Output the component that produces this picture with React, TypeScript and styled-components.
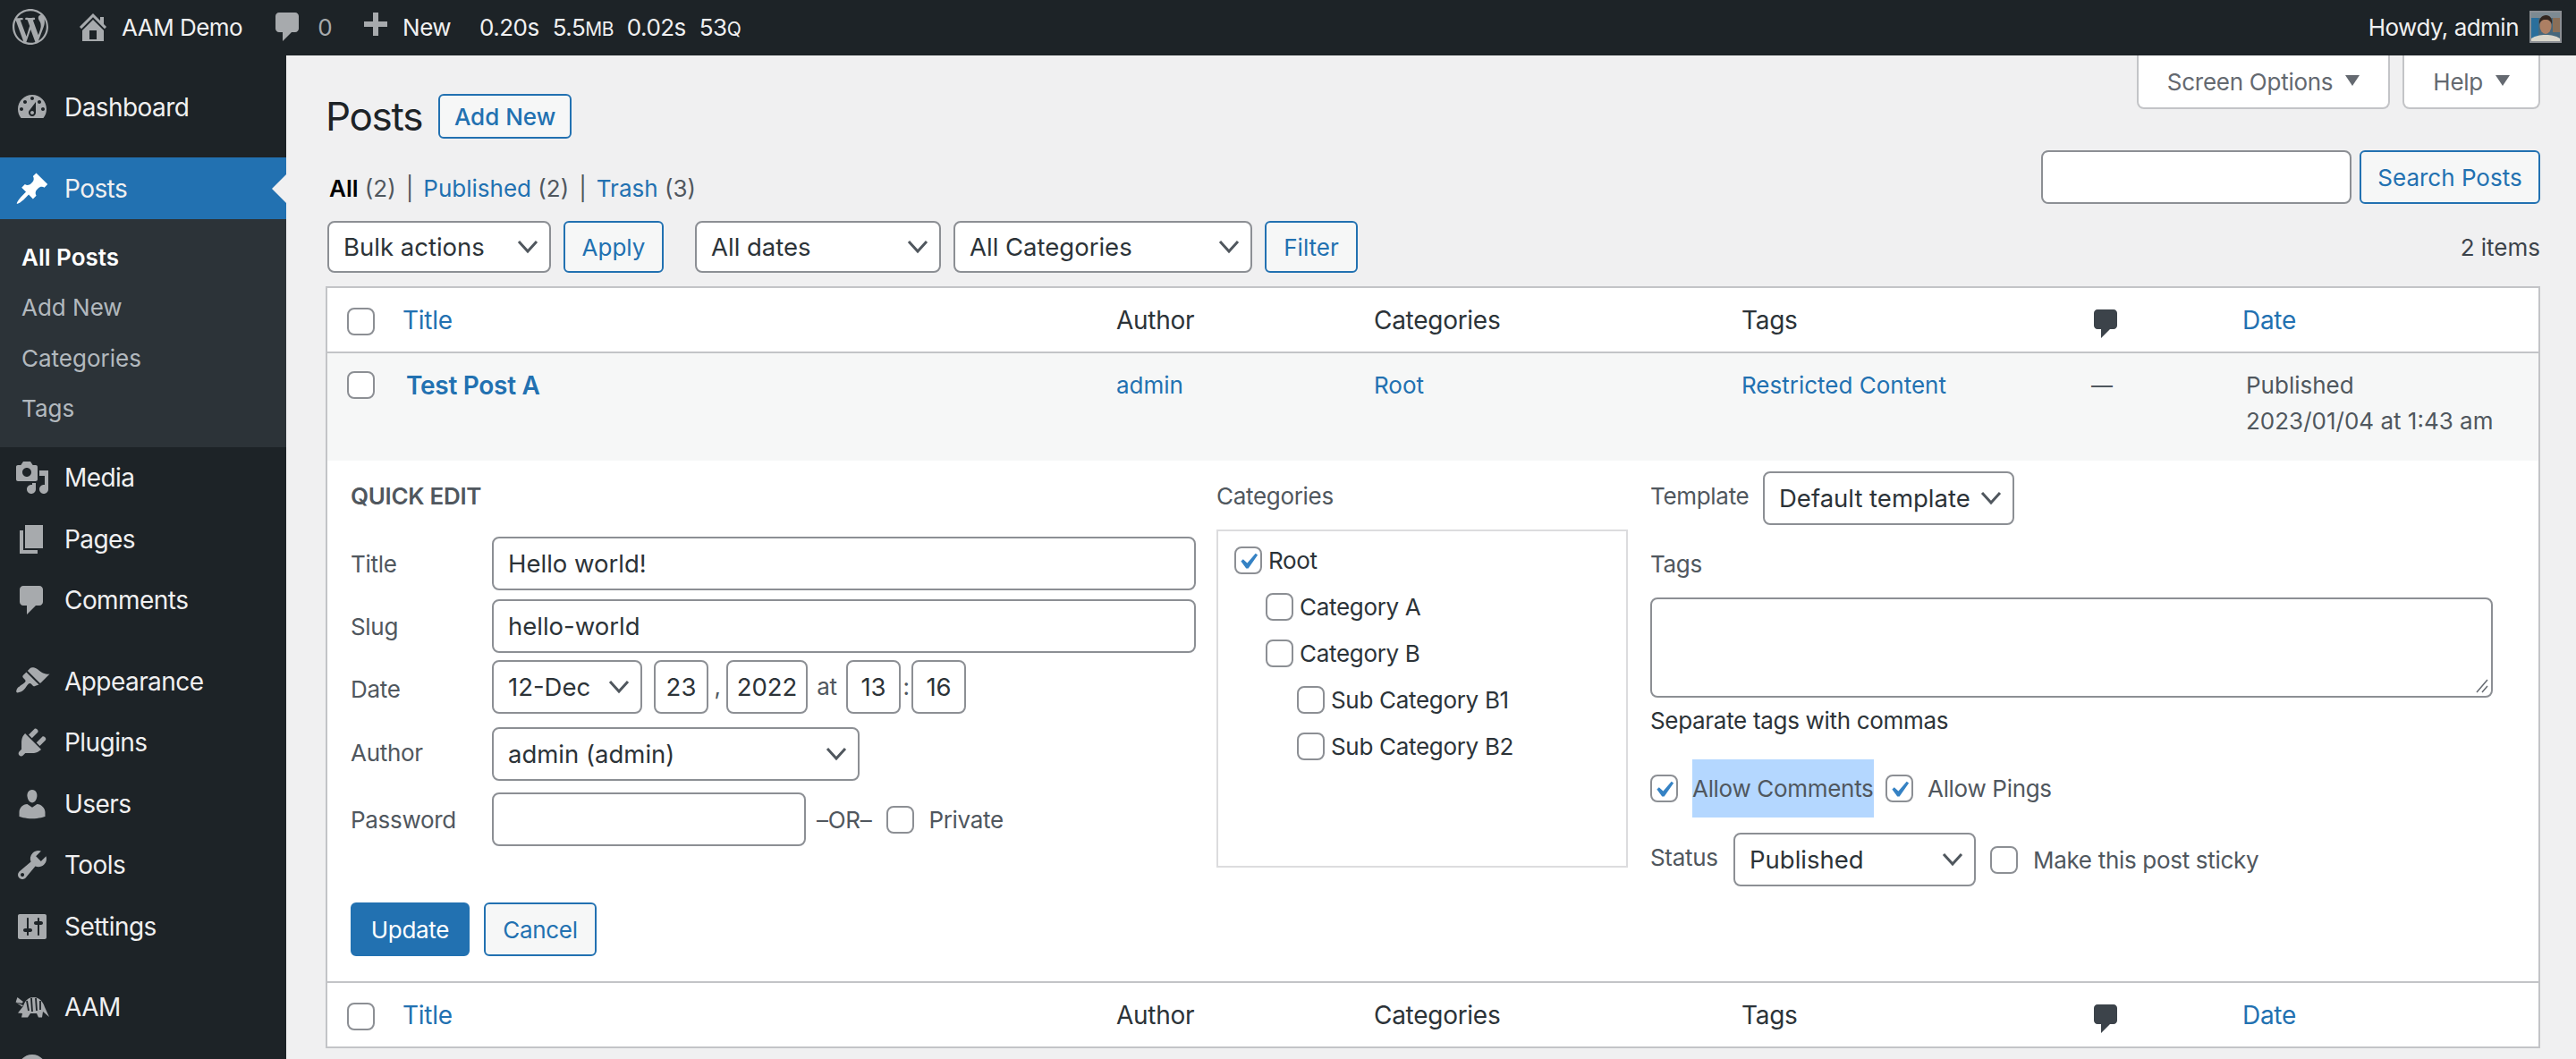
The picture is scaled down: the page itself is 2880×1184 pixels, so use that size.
import React from "react";
import styled, { createGlobalStyle } from "styled-components";

const GlobalStyle = createGlobalStyle`
  html, body {
    margin: 0;
    padding: 0;
    width: 2880px;
    height: 1184px;
    overflow: hidden;
    background: #f0f0f1;
    font-family: Inter, "Noto Sans", sans-serif;
    font-size: 26px;
    color: #3c434a;
  }
  * { box-sizing: border-box; }
`;

const Icons: Record<string, string> = {
  logo: "M20 10c0-5.51-4.49-10-10-10C4.48 0 0 4.49 0 10c0 5.52 4.48 10 10 10 5.51 0 10-4.48 10-10zM7.78 15.37L4.37 6.22c.55-.02 1.17-.08 1.17-.08.5-.06.44-1.13-.06-1.11 0 0-1.45.11-2.37.11-.18 0-.37 0-.58-.01C4.12 2.69 6.87 1.11 10 1.11c2.33 0 4.45.87 6.05 2.34-.68-.11-1.65.39-1.65 1.58 0 .74.45 1.36.9 2.1.35.61.55 1.36.55 2.46 0 1.49-1.4 5-1.4 5l-3.03-8.37c.54-.02.82-.17.82-.17.5-.05.44-1.25-.06-1.22 0 0-1.44.12-2.38.12-.87 0-2.33-.12-2.33-.12-.5-.03-.56 1.2-.06 1.22l.92.08 1.26 3.41zM17.41 10c.24-.64.74-1.87.43-4.25.7 1.29 1.05 2.71 1.05 4.25 0 3.29-1.73 6.24-4.4 7.78.97-2.59 1.94-5.2 2.92-7.78zM6.1 18.09C3.12 16.65 1.11 13.53 1.11 10c0-1.3.23-2.48.72-3.59C3.25 10.3 4.67 14.2 6.1 18.09zm4.03-6.63l2.58 6.98c-.86.29-1.76.45-2.71.45-.79 0-1.57-.11-2.29-.33.81-2.38 1.62-4.74 2.42-7.1z",
  home: "M16 8.5l1.53 1.53-1.06 1.06L10 4.62l-6.47 6.47-1.06-1.06L10 2.5l4 4v-2h2v4zm-6-2.46l6 5.99V18H4v-5.97zM12 17v-5H8v5h4z",
  comment: "M5 2h9c1.1 0 2 .9 2 2v7c0 1.1-.9 2-2 2h-2l-5 5v-5H5c-1.1 0-2-.9-2-2V4c0-1.1.9-2 2-2z",
  plus: "M17 7v3h-5v5H9v-5H4V7h5V2h3v5h5z",
  dashboard: "M3.76 16h12.48c1.1-1.37 1.76-3.11 1.76-5 0-4.42-3.58-8-8-8s-8 3.58-8 8c0 1.89.66 3.63 1.76 5zM10 4c.55 0 1 .45 1 1s-.45 1-1 1-1-.45-1-1 .45-1 1-1zM6 6c.55 0 1 .45 1 1s-.45 1-1 1-1-.45-1-1 .45-1 1-1zm8 0c.55 0 1 .45 1 1s-.45 1-1 1-1-.45-1-1 .45-1 1-1zm-5.37 5.55L12 7v6c0 1.1-.9 2-2 2s-2-.9-2-2c0-.57.24-1.08.63-1.45zM4 10c.55 0 1 .45 1 1s-.45 1-1 1-1-.45-1-1 .45-1 1-1zm12 0c.55 0 1 .45 1 1s-.45 1-1 1-1-.45-1-1 .45-1 1-1zm-5 3c0-.55-.45-1-1-1s-1 .45-1 1 .45 1 1 1 1-.45 1-1z",
  pin: "M10.44 3.02l1.82-1.82 6.36 6.35-1.83 1.82c-1.05-.68-2.48-.57-3.41.36l-.75.75c-.92.93-1.04 2.35-.35 3.41l-1.83 1.82-2.41-2.41-2.8 2.79c-.42.42-3.38 2.71-3.8 2.29s1.86-3.39 2.28-3.81l2.79-2.79L4.1 9.36l1.83-1.82c1.05.69 2.48.57 3.4-.36l.75-.75c.93-.92 1.05-2.35.36-3.41z",
  media: "M13 11V4c0-.55-.45-1-1-1h-1.67L9 1H5L3.67 3H2c-.55 0-1 .45-1 1v7c0 .55.45 1 1 1h10c.55 0 1-.45 1-1zM7 4.5c1.38 0 2.5 1.12 2.5 2.5S8.38 9.5 7 9.5 4.5 8.38 4.5 7 5.62 4.5 7 4.5zM14 6h5v10.5c0 1.38-1.12 2.5-2.5 2.5S14 17.88 14 16.5s1.12-2.5 2.5-2.5c.17 0 .34.02.5.05V9h-3V6zm-4 8.05V13h2v3.5c0 1.38-1.12 2.5-2.5 2.5S7 17.88 7 16.5 8.12 14 9.5 14c.17 0 .34.02.5.05z",
  pages: "M6 15V2h10v13H6zm-1 1h8v2H3V5h2v11z",
  appearance: "M14.48 11.06L7.41 3.99l1.5-1.5c.5-.56 2.3-.47 3.51.32 1.21.8 1.43 1.28 2.91 2.1 1.18.64 2.45 1.26 4.45.85zm-.71.71L6.7 4.7 4.93 6.47c-.39.39-.39 1.02 0 1.41l1.06 1.06c.39.39.39 1.03 0 1.42-.6.6-1.43 1.11-2.21 1.69-.35.26-.7.53-1.01.84C1.43 13.23.78 15.54 1.27 16.03c.49.49 2.8-.16 4.14-1.5.31-.31.58-.66.84-1.01.58-.78 1.09-1.61 1.69-2.21.39-.39 1.03-.39 1.42 0l1.06 1.06c.39.39 1.02.39 1.41 0z",
  plugins: "M13.11 4.36L9.87 7.6 8 5.73l3.24-3.24c.35-.34 1.05-.2 1.56.32.52.51.66 1.21.31 1.55zm-8 1.77l.91-1.12 9.01 9.01-1.19.84c-.71.71-2.63 1.16-3.82 1.16H6.14L4.9 17.26c-.59.59-1.54.59-2.12 0-.59-.58-.59-1.53 0-2.12l1.24-1.24v-3.88c0-1.13.4-3.19 1.09-3.89zm7.26 3.97l3.24-3.24c.34-.35 1.04-.21 1.55.31.52.51.66 1.21.31 1.55l-3.24 3.25z",
  users: "M10 9.25c-2.27 0-2.73-3.44-2.73-3.44C7 4.02 7.82 2 9.97 2c2.16 0 2.98 2.02 2.71 3.81 0 0-.41 3.44-2.68 3.44zm0 2.57L12.72 10c2.39 0 4.52 2.33 4.52 4.53v2.49s-3.65 1.13-7.24 1.13c-3.65 0-7.24-1.13-7.24-1.13v-2.49c0-2.25 1.94-4.48 4.47-4.48z",
  tools: "M16.68 9.77c-1.34 1.34-3.3 1.67-4.95.99l-5.41 6.52c-.99.99-2.59.99-3.58 0s-.99-2.59 0-3.57l6.52-5.42c-.68-1.65-.35-3.61.99-4.95 1.28-1.28 3.12-1.62 4.72-1.06l-2.89 2.89 2.82 2.82 2.86-2.87c.53 1.58.18 3.39-1.08 4.65zM3.81 16.21c.4.39 1.04.39 1.43 0 .4-.4.4-1.04 0-1.43-.39-.4-1.03-.4-1.43 0-.39.39-.39 1.03 0 1.43z",
  settings: "M18 16V4c0-.55-.45-1-1-1H3c-.55 0-1 .45-1 1v12c0 .55.45 1 1 1h14c.55 0 1-.45 1-1zM8 11h1c.55 0 1 .45 1 1s-.45 1-1 1H8v1.5c0 .28-.22.5-.5.5s-.5-.22-.5-.5V13H6c-.55 0-1-.45-1-1s.45-1 1-1h1V5.5c0-.28.22-.5.5-.5s.5.22.5.5V11zm5-2h-1c-.55 0-1-.45-1-1s.45-1 1-1h1V5.5c0-.28.22-.5.5-.5s.5.22.5.5V7h1c.55 0 1 .45 1 1s-.45 1-1 1h-1v5.5c0 .28-.22.5-.5.5s-.5-.22-.5-.5V9z",
  collapse: "M18 10c0-4.42-3.58-8-8-8s-8 3.58-8 8 3.58 8 8 8 8-3.58 8-8zm-8 4l-4-4 4-4v8z",
};

const Glyph = styled.svg<{ $color?: string; $left?: number }>`
  width: 40px;
  height: 40px;
  fill: ${(p) => p.$color || "#a7aaad"};
  flex: none;
  margin-left: ${(p) => p.$left || 0}px;
`;

const Icon: React.FC<{ name: string; color?: string; left?: number }> = ({ name, color, left }) => (
  <Glyph viewBox="0 0 20 20" $color={color} $left={left}>
    <path d={Icons[name]} />
  </Glyph>
);

const Armadillo: React.FC = () => (
  <Glyph viewBox="0 0 20 20">
    <path d="M2 13.3L5 9.5C6 6 8 4.5 11 4.5c3 0 5 2.5 6 5.5l2.5 5.5-3.5-3-.5 3.3h-2l-1-2.3H9l-1.5 2.3H4l.5-2.3zM1.7 4.5L5 7l-.8.9-3.4-.6 3.4 1.4.8.3-.6.8L.8 7.3z" />
    <path
      d="M7 6.5l1 5.5M9.5 5l.5 7.5M12 5l.5 7M14.5 6.5v5"
      fill="none"
      stroke="#1d2327"
      strokeWidth=".9"
    />
  </Glyph>
);

const ChevronSvg = styled.svg`
  width: 24px;
  height: 24px;
  fill: none;
  stroke: #50575e;
  stroke-width: 3;
  flex: none;
`;

const Chevron: React.FC = () => (
  <ChevronSvg viewBox="0 0 24 24">
    <path d="M2 6l10 11L22 6" />
  </ChevronSvg>
);

/* admin bar */
const TopBar = styled.div`
  height: 62px;
  background: #1d2327;
  color: #f0f0f1;
  display: flex;
  align-items: center;
  padding: 0 16px 2px 14px;
  letter-spacing: -0.02em;
`;

const BarText = styled.span<{ $left?: number; $muted?: boolean }>`
  margin-left: ${(p) => p.$left || 0}px;
  color: ${(p) => (p.$muted ? "#a7aaad" : "#f0f0f1")};
  white-space: nowrap;
`;

const SmallCaps = styled.span`
  font-size: 21px;
`;

const Howdy = styled.div`
  margin-left: auto;
  display: flex;
  align-items: center;
  gap: 12px;
`;

const Avatar = styled.svg`
  width: 36px;
  height: 36px;
  border: 2px solid #8c8f94;
  display: block;
`;

/* page frame */
const Frame = styled.div`
  display: flex;
  height: 1122px;
`;

const Sidebar = styled.nav`
  width: 320px;
  flex: none;
  background: #1d2327;
  padding-top: 24px;
  overflow: hidden;
`;

const MenuItem = styled.div<{ $active?: boolean; $gap?: number }>`
  position: relative;
  display: flex;
  align-items: center;
  height: ${(p) => (p.$active ? 69 : 68.5)}px;
  margin-top: ${(p) => p.$gap || 0}px;
  padding-left: 16px;
  gap: 16px;
  font-size: 28px;
  letter-spacing: -0.02em;
  color: #f0f0f1;
  white-space: nowrap;
  background: ${(p) => (p.$active ? "#2271b1" : "transparent")};
  ${(p) =>
    p.$active &&
    `
    &::after {
      content: "";
      position: absolute;
      right: 0;
      top: 50%;
      margin-top: -16px;
      border: 16px solid transparent;
      border-right-color: #f0f0f1;
    }
  `}
`;

const SubMenu = styled.div`
  background: #2c3338;
  height: 255px;
  padding: 14px 0 0 24px;
`;

const SubItem = styled.div<{ $current?: boolean }>`
  height: 56.5px;
  display: flex;
  align-items: center;
  color: ${(p) => (p.$current ? "#fff" : "rgba(240,246,252,.7)")};
  font-weight: ${(p) => (p.$current ? 600 : 400)};
`;

const Main = styled.main`
  flex: 1;
  min-width: 0;
  padding: 0 40px 0 44px;
`;

const ScreenMeta = styled.div`
  display: flex;
  justify-content: flex-end;
  gap: 14px;
`;

const MetaTab = styled.div`
  height: 60px;
  background: #fff;
  border: 2px solid #c3c4c7;
  border-top: none;
  border-radius: 0 0 8px 8px;
  color: #646970;
  display: flex;
  align-items: center;
  gap: 14px;
  padding: 0 32px;
  letter-spacing: -0.01em;

  &::after {
    content: "";
    border: 8px solid transparent;
    border-top: 12px solid #646970;
    border-bottom: none;
    margin-bottom: 2px;
  }
`;

const HeadingRow = styled.div`
  display: flex;
  align-items: center;
  gap: 18px;
  margin-top: -18px;
  height: 52px;
`;

const Title = styled.h1`
  margin: 0;
  font-size: 44px;
  letter-spacing: -0.03em;
  font-weight: 400;
  color: #1d2327;
`;

const LinkButton = styled.div<{ $primary?: boolean; $width: number; $height?: number }>`
  height: ${(p) => p.$height || 58}px;
  width: ${(p) => p.$width}px;
  display: inline-flex;
  align-items: center;
  justify-content: center;
  border: 2px solid #2271b1;
  border-radius: 6px;
  background: ${(p) => (p.$primary ? "#2271b1" : "#f6f7f7")};
  color: ${(p) => (p.$primary ? "#fff" : "#2271b1")};
  white-space: nowrap;
  flex: none;
`;

const AddNew = styled(LinkButton)`
  font-weight: 500;
`;

const SearchRow = styled.div`
  display: flex;
  justify-content: space-between;
  align-items: flex-start;
  margin-top: 12px;
  height: 60px;
`;

const Views = styled.div`
  margin: 27px 0 0 4px;
  color: #50575e;
  display: flex;
  gap: 11px;
`;

const ViewLink = styled.span`
  color: #2271b1;
`;

const ViewCurrent = styled.span`
  color: #000;
  font-weight: 600;
`;

const SearchBox = styled.div`
  display: flex;
  gap: 9px;
`;

const Field = styled.div<{ $width?: number; $height?: number; $left?: number }>`
  height: ${(p) => p.$height || 60}px;
  width: ${(p) => p.$width}px;
  margin-left: ${(p) => p.$left || 0}px;
  flex: none;
  background: #fff;
  border: 2px solid #8c8f94;
  border-radius: 8px;
  color: #2c3338;
  font-size: 27.5px;
  letter-spacing: 0;
  padding: 0 16px;
  display: flex;
  align-items: center;
  white-space: nowrap;
`;

const Box = styled(Field)`
  padding: 0;
  justify-content: center;
`;

const SelectBox = styled(Field)`
  justify-content: space-between;
  padding: 0 12px 0 16px;
`;

const Select: React.FC<{ w: number; h?: number; left?: number; label: string }> = ({ w, h, left, label }) => (
  <SelectBox $width={w} $height={h} $left={left}>
    {label}
    <Chevron />
  </SelectBox>
);

const TableNav = styled.div`
  display: flex;
  align-items: center;
  margin-top: 19px;
  padding-left: 2px;
  height: 58px;
`;

const NavGroup = styled.div<{ $left?: number; $gap: number }>`
  display: flex;
  align-items: center;
  gap: ${(p) => p.$gap}px;
  margin-left: ${(p) => p.$left || 0}px;
`;

const Count = styled.div`
  margin-left: auto;
  color: #3c434a;
`;

const Table = styled.div`
  margin-top: 15px;
  background: #fff;
  border: 2px solid #c3c4c7;
  width: 2476px;
`;

const Columns = styled.div<{ $tall: number; $bg?: string; $top: number; $line?: boolean }>`
  display: grid;
  grid-template-columns: 84px 798px 288px 411px 395px 165px 1fr;
  height: ${(p) => p.$tall}px;
  background: ${(p) => p.$bg || "#fff"};
  padding-top: ${(p) => p.$top}px;
  border-bottom: ${(p) => (p.$line ? "2px solid #c3c4c7" : "none")};
  align-items: start;
`;

const CheckCell = styled.div`
  padding-left: 22px;
`;

const Check = styled.span<{ $left?: number }>`
  display: inline-flex;
  position: relative;
  width: 31px;
  height: 31px;
  margin-left: ${(p) => p.$left || 0}px;
  background: #fff;
  border: 2px solid #8c8f94;
  border-radius: 8px;
  flex: none;
`;

const Tick = styled.svg`
  position: absolute;
  left: -5px;
  top: -3px;
  width: 36px;
  height: 36px;
  fill: #3582c4;
`;

const CheckBox: React.FC<{ on?: boolean; left?: number }> = ({ on, left }) => (
  <Check $left={left}>
    {on && (
      <Tick viewBox="0 0 20 20">
        <path d="M14.83 4.89l1.34.94-5.81 8.38H9.02L5.78 9.67l1.34-1.25 2.57 2.4z" />
      </Tick>
    )}
  </Check>
);

const HeadLink = styled.span`
  color: #2271b1;
  font-size: 28px;
  letter-spacing: -0.01em;
  line-height: 32px;
  margin-top: -2px;
`;

const HeadText = styled(HeadLink)`
  color: #2c3338;
`;

const CellLink = styled.span`
  color: #2271b1;
  line-height: 32px;
`;

const PostTitle = styled.span`
  color: #2271b1;
  font-weight: 600;
  font-size: 28px;
  padding-left: 4px;
  letter-spacing: -0.01em;
  line-height: 32px;
`;

const DateCell = styled.div`
  color: #50575e;
  line-height: 40px;
  margin-top: -4px;
  padding-left: 4px;
`;

const Dash = styled.span`
  color: #50575e;
  line-height: 32px;
  font-size: 24px;
  margin-left: -4px;
`;

const CommentHead = styled.div`
  margin: -2px 0 0 -7px;
`;

/* quick edit */
const QuickEdit = styled.div`
  height: 584px;
  display: grid;
  grid-template-columns: 968px 485px 1fr;
  padding-left: 26px;
  border-bottom: 2px solid #c3c4c7;
  letter-spacing: -0.012em;
`;

const LeftCol = styled.div`
  padding-top: 24px;
`;

const Legend = styled.div<{ $strong?: boolean }>`
  font-weight: ${(p) => (p.$strong ? 600 : 400)};
  color: #50575e;
  height: 31px;
  line-height: 31px;
`;

const FormRows = styled.div`
  margin-top: 25px;
  display: flex;
  flex-direction: column;
`;

const FormRow = styled.div<{ $height: number }>`
  display: flex;
  align-items: center;
  height: ${(p) => p.$height}px;
`;

const RowLabel = styled.div<{ $drop?: number; $raise?: number }>`
  width: 158px;
  color: #50575e;
  flex: none;
  padding-top: ${(p) => p.$drop || 0}px;
  padding-bottom: ${(p) => p.$raise || 0}px;
`;

const Sep = styled.span<{ $w: number }>`
  width: ${(p) => p.$w}px;
  text-align: center;
  flex: none;
  color: #50575e;
`;

const Actions = styled.div`
  display: flex;
  gap: 16px;
  margin-top: 63px;
`;

const SmallLabel = styled.span<{ $left?: number; $width?: number }>`
  color: #50575e;
  margin-left: ${(p) => p.$left || 0}px;
  width: ${(p) => (p.$width ? `${p.$width}px` : "auto")};
  padding-bottom: ${(p) => (p.$width ? 5 : 0)}px;
  white-space: nowrap;
  flex: none;
`;

const MidCol = styled.div`
  padding-top: 24px;
`;

const CatBox = styled.div`
  margin-top: 22px;
  width: 460px;
  height: 378px;
  border: 2px solid #dcdcde;
  padding: 6px 0 0 18px;
`;

const CatRow = styled.div<{ $level: number }>`
  display: flex;
  align-items: center;
  height: 52px;
  gap: 7px;
  margin-left: ${(p) => p.$level * 35}px;
  color: #2c3338;
`;

const RightCol = styled.div`
  padding-top: 12px;
`;

const InlineRow = styled.div<{ $top?: number }>`
  display: flex;
  align-items: center;
  margin-top: ${(p) => p.$top || 0}px;
`;

const TagsLabel = styled.div`
  color: #50575e;
  margin-top: 28px;
`;

const TagsArea = styled.div`
  position: relative;
  margin-top: 22px;
  height: 112px;
  width: 942px;
  background: #fff;
  border: 2px solid #8c8f94;
  border-radius: 8px;
`;

const Grip = styled.svg`
  position: absolute;
  right: 2px;
  bottom: 2px;
  width: 20px;
  height: 20px;
  stroke: #646970;
  stroke-width: 1.5;
`;

const Hint = styled.div`
  color: #2c3338;
  margin-top: 10px;
`;

const Selected = styled.span`
  background: #b4d7ff;
  height: 65px;
  width: 203px;
  flex: none;
  display: inline-flex;
  align-items: center;
  margin-left: 16px;
  color: #50575e;
  white-space: nowrap;
`;

const menuA = [
  { icon: "media", label: "Media" },
  { icon: "pages", label: "Pages" },
  { icon: "comment", label: "Comments" },
];

const menuB = [
  { icon: "appearance", label: "Appearance", gap: 22 },
  { icon: "plugins", label: "Plugins" },
  { icon: "users", label: "Users" },
  { icon: "tools", label: "Tools" },
  { icon: "settings", label: "Settings" },
];

const categories = [
  { label: "Root", level: 0, on: true },
  { label: "Category A", level: 1 },
  { label: "Category B", level: 1 },
  { label: "Sub Category B1", level: 2 },
  { label: "Sub Category B2", level: 2 },
];

const TableHead: React.FC = () => (
  <>
    <CheckCell>
      <CheckBox />
    </CheckCell>
    <HeadLink>Title</HeadLink>
    <HeadText>Author</HeadText>
    <HeadText>Categories</HeadText>
    <HeadText>Tags</HeadText>
    <CommentHead>
      <Icon name="comment" color="#3c434a" />
    </CommentHead>
    <HeadLink>Date</HeadLink>
  </>
);

const App: React.FC = () => (
  <>
    <GlobalStyle />
    <TopBar>
      <Icon name="logo" />
      <Icon name="home" left={30} />
      <BarText $left={12}>AAM Demo</BarText>
      <Icon name="comment" left={31} />
      <BarText $left={13} $muted>0</BarText>
      <Icon name="plus" left={28} />
      <BarText $left={11}>New</BarText>
      <BarText $left={32}>0.20s</BarText>
      <BarText $left={15}>
        5.5<SmallCaps>MB</SmallCaps>
      </BarText>
      <BarText $left={15}>0.02s</BarText>
      <BarText $left={15}>
        53<SmallCaps>Q</SmallCaps>
      </BarText>
      <Howdy>
        Howdy, admin
        <Avatar viewBox="0 0 32 32">
          <rect width="32" height="32" fill="#46687c" />
          <rect width="8" height="32" fill="#2a6f9c" />
          <rect width="32" height="6" fill="#7d8a92" />
          <rect x="24" y="6" width="8" height="16" fill="#8a6f58" />
          <path d="M0 32v-3c5-3 9-4 16-4s11 1 16 4v3z" fill="#d9d6cb" />
          <ellipse cx="16" cy="15" rx="6.5" ry="9" fill="#ad7f63" />
          <path d="M9 13c-1-6 3-10 7.500-10S24 7 23 13c-1-3-3-5-7-5s-6 2-7 5z" fill="#33261f" />
        </Avatar>
      </Howdy>
    </TopBar>
    <Frame>
      <Sidebar>
        <MenuItem>
          <Icon name="dashboard" />
          Dashboard
        </MenuItem>
        <MenuItem $active $gap={21.5}>
          <Icon name="pin" color="#fff" />
          Posts
        </MenuItem>
        <SubMenu>
          <SubItem $current>All Posts</SubItem>
          <SubItem>Add New</SubItem>
          <SubItem>Categories</SubItem>
          <SubItem>Tags</SubItem>
        </SubMenu>
        {menuA.map((m) => (
          <MenuItem key={m.label}>
            <Icon name={m.icon} />
            {m.label}
          </MenuItem>
        ))}
        {menuB.map((m) => (
          <MenuItem key={m.label} $gap={m.gap}>
            <Icon name={m.icon} />
            {m.label}
          </MenuItem>
        ))}
        <MenuItem $gap={22}>
          <Armadillo />
          AAM
        </MenuItem>
        <MenuItem>
          <Icon name="collapse" />
          Collapse menu
        </MenuItem>
      </Sidebar>
      <Main>
        <ScreenMeta>
          <MetaTab>Screen Options</MetaTab>
          <MetaTab>Help</MetaTab>
        </ScreenMeta>
        <HeadingRow>
          <Title>Posts</Title>
          <AddNew $width={149} $height={50}>Add New</AddNew>
        </HeadingRow>
        <SearchRow>
          <Views>
            <span>
              <ViewCurrent>All</ViewCurrent> (2)
            </span>
            <span>|</span>
            <span>
              <ViewLink>Published</ViewLink> (2)
            </span>
            <span>|</span>
            <span>
              <ViewLink>Trash</ViewLink> (3)
            </span>
          </Views>
          <SearchBox>
            <Field $width={347} />
            <LinkButton $width={202} $height={60}>Search Posts</LinkButton>
          </SearchBox>
        </SearchRow>
        <TableNav>
          <NavGroup $gap={14}>
            <Select w={250} h={58} label="Bulk actions" />
            <LinkButton $width={112}>Apply</LinkButton>
          </NavGroup>
          <NavGroup $left={35} $gap={14}>
            <Select w={275} h={58} label="All dates" />
            <Select w={334} h={58} label="All Categories" />
            <LinkButton $width={104}>Filter</LinkButton>
          </NavGroup>
          <Count>2 items</Count>
        </TableNav>
        <Table>
          <Columns $tall={73} $top={22} $line>
            <TableHead />
          </Columns>
          <Columns $tall={120} $top={20} $bg="#f6f7f7">
            <CheckCell>
              <CheckBox />
            </CheckCell>
            <PostTitle>Test Post A</PostTitle>
            <CellLink>admin</CellLink>
            <CellLink>Root</CellLink>
            <CellLink>Restricted Content</CellLink>
            <Dash>—</Dash>
            <DateCell>
              Published
              <br />
              2023/01/04 at 1:43 am
            </DateCell>
          </Columns>
          <QuickEdit>
            <LeftCol>
              <Legend $strong>QUICK EDIT</Legend>
              <FormRows>
                <FormRow $height={70}>
                  <RowLabel>Title</RowLabel>
                  <Field $width={787}>Hello world!</Field>
                </FormRow>
                <FormRow $height={70}>
                  <RowLabel>Slug</RowLabel>
                  <Field $width={787}>hello-world</Field>
                </FormRow>
                <FormRow $height={65}>
                  <RowLabel $drop={6}>Date</RowLabel>
                  <Select w={168} label="12-Dec" />
                  <Box $width={61} $left={13}>23</Box>
                  <Sep $w={20}>,</Sep>
                  <Box $width={91}>2022</Box>
                  <Sep $w={43}>at</Sep>
                  <Box $width={61}>13</Box>
                  <Sep $w={12}>:</Sep>
                  <Box $width={61}>16</Box>
                </FormRow>
                <FormRow $height={86}>
                  <RowLabel $raise={3}>Author</RowLabel>
                  <Select w={411} label="admin (admin)" />
                </FormRow>
                <FormRow $height={60}>
                  <RowLabel>Password</RowLabel>
                  <Field $width={351} />
                  <SmallLabel $left={12}>–OR–</SmallLabel>
                  <CheckBox left={17} />
                  <SmallLabel $left={16}>Private</SmallLabel>
                </FormRow>
              </FormRows>
              <Actions>
                <LinkButton $primary $width={133} $height={60}>Update</LinkButton>
                <LinkButton $width={126} $height={60}>Cancel</LinkButton>
              </Actions>
            </LeftCol>
            <MidCol>
              <Legend>Categories</Legend>
              <CatBox>
                {categories.map((c) => (
                  <CatRow key={c.label} $level={c.level}>
                    <CheckBox on={c.on} />
                    {c.label}
                  </CatRow>
                ))}
              </CatBox>
            </MidCol>
            <RightCol>
              <InlineRow>
                <SmallLabel $width={126}>Template</SmallLabel>
                <Select w={281} label="Default template" />
              </InlineRow>
              <TagsLabel>Tags</TagsLabel>
              <TagsArea>
                <Grip viewBox="0 0 20 20">
                  <path d="M18 4L6 18M18 11l-6 7" />
                </Grip>
              </TagsArea>
              <Hint>Separate tags with commas</Hint>
              <InlineRow $top={28}>
                <CheckBox on />
                <Selected>Allow Comments</Selected>
                <CheckBox on left={13} />
                <SmallLabel $left={16}>Allow Pings</SmallLabel>
              </InlineRow>
              <InlineRow $top={17}>
                <SmallLabel $width={93}>Status</SmallLabel>
                <Select w={271} label="Published" />
                <CheckBox left={16} />
                <SmallLabel $left={17}>Make this post sticky</SmallLabel>
              </InlineRow>
            </RightCol>
          </QuickEdit>
          <Columns $tall={71} $top={22}>
            <TableHead />
          </Columns>
        </Table>
      </Main>
    </Frame>
  </>
);

export default App;
